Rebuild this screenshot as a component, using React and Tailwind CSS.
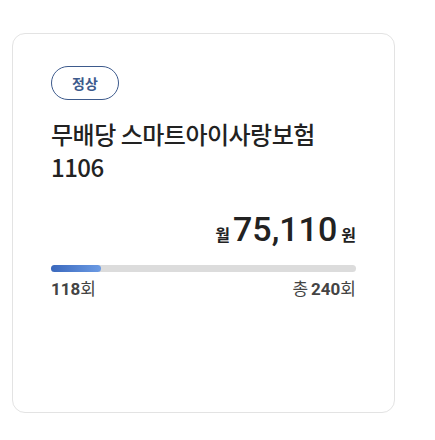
export default function App() {
  return (
    <div className="w-[435px] h-[440px] bg-white pt-[33px] pl-[12px] font-['Noto_Sans_CJK_KR','Noto_Sans',sans-serif]">
      <div className="w-[383px] h-[380px] border border-[#e3e3e3] rounded-[13px] pt-[32px] px-[38px]">
        <div className="flex">
          <span className="w-[68px] h-[34px] rounded-full border border-[#3d5a8c] text-[#3d5a8c] text-[14px] font-semibold flex items-center justify-center">정상</span>
        </div>
        <div className="mt-[17px] text-[24px] leading-[33px] text-[#222] font-medium tracking-[-0.5px]">
          무배당 스마트아이사랑보험<br />1106
        </div>
        <div className="mt-[28px] flex items-baseline justify-end text-[#222]">
          <span className="text-[16px] font-bold mr-[3px]">월</span>
          <span className="text-[34px] font-medium leading-[36px] font-['Roboto',sans-serif]">75,110</span>
          <span className="text-[16px] font-bold ml-[4px]">원</span>
        </div>
        <div className="mt-[18px] h-[7px] rounded-full bg-[#dcdcdc]">
          <div className="h-full w-[50px] rounded-full bg-gradient-to-r from-[#3a68bd] to-[#6c9be4]" />
        </div>
        <div className="mt-[5px] flex justify-between text-[#444] text-[17px] leading-[22px]">
          <span><span className="font-bold font-['Roboto',sans-serif]">118</span><span>회</span></span>
          <span><span>총</span><span className="font-bold ml-[3px] font-['Roboto',sans-serif]">240</span><span>회</span></span>
        </div>
      </div>
    </div>
  );
}
